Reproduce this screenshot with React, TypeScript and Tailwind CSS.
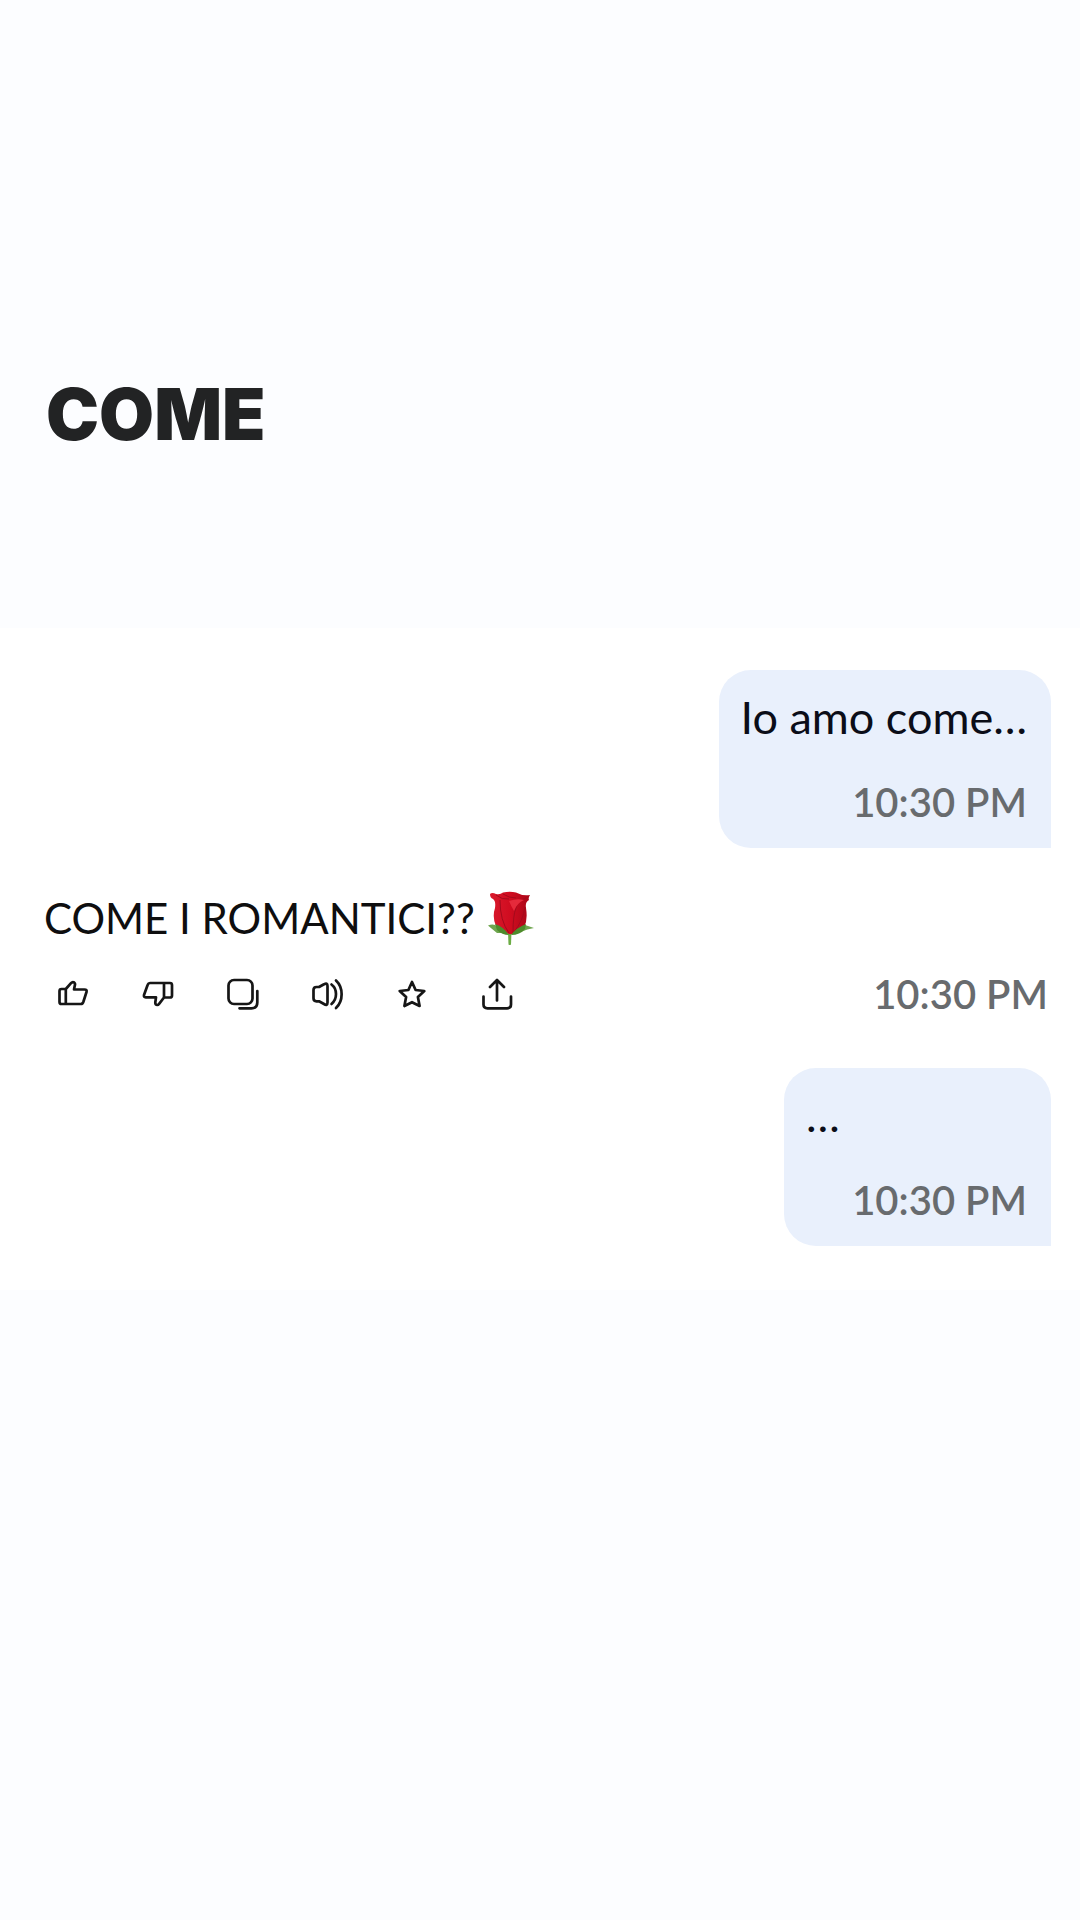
import React from 'react';

const Icon: React.FC<{ children: React.ReactNode }> = ({ children }) => (
  <svg viewBox="0 0 32 32" className="size-8" fill="none" stroke="currentColor" strokeWidth="2.7" strokeLinecap="round" strokeLinejoin="round" aria-hidden="true">
    {children}
  </svg>
);

const actions = [
  {
    label: 'Good response',
    icon: (
      <path d="M8.8 11H4.5Q2.5 11 2.5 13V24Q2.5 26 4.5 26H8.8V11L14 5.2Q15.5 3.5 17.2 4.5Q18.5 5.5 17.8 7.5L17 11.5H27.5Q30.3 11.5 29.5 14L26.3 24Q25.6 26 23.8 26H8.8" />
    ),
  },
  {
    label: 'Bad response',
    icon: (
      <path d="M22 5H28Q30 5 30 7V17.5Q30 19.5 28 19.5H22V5H8Q6.3 5 5.7 6.8L2 17Q1.5 19.3 3.7 19.3H14L13.3 24.5Q13.2 27 15.3 27Q16.2 27 17.3 25.6L22 19.5" />
    ),
  },
  {
    label: 'Copy',
    icon: (
      <>
        <rect x="1.5" y="2" width="24" height="24" rx="5.5" />
        <path d="M30.3 13V24.5Q30.3 30.3 24.5 30.3H12.5" />
      </>
    ),
  },
  {
    label: 'Read aloud',
    icon: (
      <>
        <path d="M4.5 9H7L12 6.3Q15.5 4.3 15.5 8V24.5Q15.5 28.2 12 26L7 23.3H4.5Q1.5 23.3 1.5 20.3V12Q1.5 9 4.5 9Z" />
        <path d="M19.5 6.5C25.5 11 25.5 21 19.5 26M24 2.5C31.5 9.5 31.5 23 24 30" />
      </>
    ),
  },
  {
    label: 'Favorite',
    icon: (
      <path d="M15 4L18.6 12L27.3 13L20.9 19L22.6 28L15 24.2L7.4 28L9.1 19L2.7 13L11.4 12Z" />
    ),
  },
  {
    label: 'Share',
    icon: (
      <path d="M1.5 18.5V26.5Q1.5 30.3 5.5 30.3H25Q29 30.3 29 26.5V18.5M15 22.5V2M8 9L15 2L22 9" />
    ),
  },
];

const Time: React.FC = () => (
  <time dateTime="22:30" className="block text-right text-[40px] leading-12 font-semibold text-[#686b6e]">10:30 PM</time>
);

const Bubble: React.FC<{ text: string }> = ({ text }) => (
  <div className="flex min-w-[267px] flex-col gap-9 self-end rounded-[32px] rounded-br-none bg-[#e9f0fc] pt-[22px] pr-6 pb-[22px] pl-[22px]">
    <p className="text-[45px] leading-[50px] text-[#0b0d18]">{text}</p>
    <Time />
  </div>
);

const Rose: React.FC = () => (
  <svg viewBox="0 0 48 56" className="h-14 w-12" role="img" aria-label="Rose">
    <defs>
      <linearGradient id="petal" x1="0" x2="1">
        <stop offset="0" stopColor="#d91a2c" />
        <stop offset="0.5" stopColor="#d00c20" />
        <stop offset="1" stopColor="#a90617" />
      </linearGradient>
    </defs>
    <path d="M21 42H24.5L24 54.5Q22.5 55.5 21.5 54.5Z" fill="#6cac45" />
    <path d="M8 35L15 43L10 43Q5 39 1 35.5Q5 34 8 35ZM38 35L47 38Q40 39 34 42Z" fill="#6fa64f" />
    <path d="M3 4Q5 2 9 4Q13 5 16 2.5Q23 1 29 2.5Q35 6 43 5Q41 8 42 10Q38 12 39 18Q41 30 37 38Q31 45 23 44Q13 43 9 36Q5 27 8 18Q9 11 6 9Q3 8 3 4Z" fill="url(#petal)" />
    <path d="M9 5Q15 10 22 9M16 4Q22 8 29 8M39 8Q31 10 29 18Q26 25 26 43M13 10Q13 31 22 43M38 17Q36 31 27 42" fill="none" stroke="#a30a1c" strokeWidth="1" />
    <path d="M22 11Q30 8 37 10Q30 13 27 21Q24 16 22 11Z" fill="#e52a3b" />
    <path d="M8 34Q17 37 22 45Q15 45 10 40ZM39 34Q29 38 24 45Q33 45 38 39Z" fill="#4e8b2c" />
  </svg>
);

const App: React.FC = () => {
  return (
    <div className="min-h-screen bg-[#fcfdff] pt-[370px] font-['Lato',sans-serif]">
      <h1 className="px-[46px] font-['Inter',sans-serif] text-[71px] leading-[88px] font-black text-[#222324]">COME</h1>

      <main className="mt-[170px] flex flex-col bg-white pt-[42px] pr-[29px] pb-11">
        <Bubble text="Io amo come…" />

        <section className="mt-10 mb-[50px] pl-11">
          <div className="flex items-center gap-3 text-[#0e0e0f]">
            <p className="text-[42px] leading-[60px]">COME I ROMANTICI??</p>
            <Rose />
          </div>
          <div className="mt-[22px] flex items-center justify-between pr-[3px] pl-[13px]">
            <div className="flex gap-[53px] text-[#161616]">
              {actions.map((action) => (
                <button key={action.label} type="button" aria-label={action.label} className="size-8 cursor-pointer">
                  <Icon>{action.icon}</Icon>
                </button>
              ))}
            </div>
            <Time />
          </div>
        </section>

        <Bubble text="…" />
      </main>
    </div>
  );
};

export default App;
